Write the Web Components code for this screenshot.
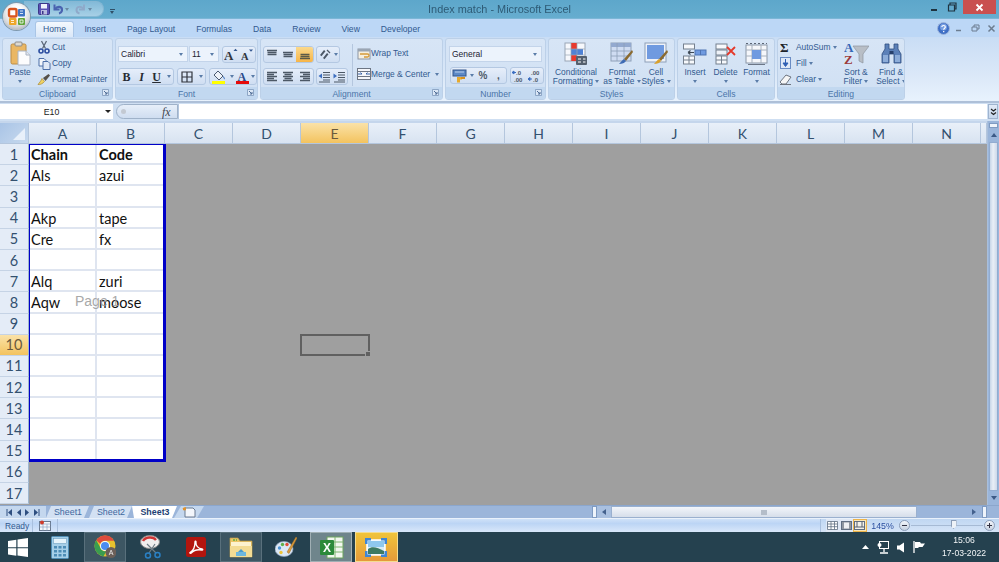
<!DOCTYPE html>
<html lang="en">
<head>
<meta charset="utf-8">
<title>Index match - Microsoft Excel</title>
<style>
html, body { margin: 0; height: 100%; overflow: hidden; background: #9f9f9f; }
</style>
</head>
<body>

<x-window>
  <x-titlebar>Index match - Microsoft Excel</x-titlebar>
  <x-tabs>
    <x-tab active>Home</x-tab><x-tab>Insert</x-tab><x-tab>Page Layout</x-tab><x-tab>Formulas</x-tab><x-tab>Data</x-tab><x-tab>Review</x-tab><x-tab>View</x-tab><x-tab>Developer</x-tab>
  </x-tabs>

  <x-ribbon>
    <x-group w="111" launcher label="Clipboard">
      <x-row>
        <x-big w="34" icon="paste">Paste<br><x-caret></x-caret></x-big>
        <x-col>
          <x-small icon="cut" g="1">Cut</x-small>
          <x-small icon="copy" g="1">Copy</x-small>
          <x-small icon="painter" g="1">Format Painter</x-small>
        </x-col>
      </x-row>
    </x-group>

    <x-group w="143" launcher label="Font">
      <x-col style="padding:7px 0 0 2px;gap:5px">
        <x-row style="gap:1px">
          <x-combo w="70">Calibri</x-combo><x-combo w="30">11</x-combo>
          <x-seg style="margin-left:2px">
            <x-btn w="16"><x-ico name="grow"></x-ico></x-btn><x-btn w="16"><x-ico name="shrink"></x-ico></x-btn>
          </x-seg>
        </x-row>
        <x-row style="gap:3px">
          <x-seg>
            <x-btn w="15"><x-letter b>B</x-letter></x-btn><x-btn w="15"><x-letter i>I</x-letter></x-btn><x-btn w="15"><x-letter b u>U</x-letter></x-btn><x-btn w="9"><x-caret></x-caret></x-btn>
          </x-seg>
          <x-seg>
            <x-btn w="18"><x-ico name="borders"></x-ico></x-btn><x-btn w="9"><x-caret></x-caret></x-btn>
          </x-seg>
          <x-seg>
            <x-btn w="18"><x-ico name="fill"></x-ico></x-btn><x-btn w="7"><x-caret></x-caret></x-btn><x-btn w="14"><x-ico name="color"></x-ico></x-btn><x-btn w="7"><x-caret></x-caret></x-btn>
          </x-seg>
        </x-row>
      </x-col>
    </x-group>

    <x-group w="183" launcher label="Alignment">
      <x-row style="padding:7px 0 0 2px">
        <x-col style="gap:5px;width:89px">
          <x-row style="gap:2px">
            <x-seg>
              <x-btn w="16"><x-ico name="vtop"></x-ico></x-btn><x-btn w="16"><x-ico name="vmid"></x-ico></x-btn><x-btn w="17" hi><x-ico name="vbot"></x-ico></x-btn>
            </x-seg>
            <x-seg><x-btn w="15"><x-ico name="orient"></x-ico></x-btn><x-btn w="7"><x-caret></x-caret></x-btn></x-seg>
          </x-row>
          <x-row style="gap:2px">
            <x-seg>
              <x-btn w="16"><x-ico name="hleft"></x-ico></x-btn><x-btn w="16"><x-ico name="hmid"></x-ico></x-btn><x-btn w="17"><x-ico name="hright"></x-ico></x-btn>
            </x-seg>
            <x-seg><x-btn w="15"><x-ico name="outdent"></x-ico></x-btn><x-btn w="15"><x-ico name="indent"></x-ico></x-btn></x-seg>
          </x-row>
        </x-col>
        <x-vsep></x-vsep>
        <x-col style="margin-top:-1px;padding-left:4px;gap:5px">
          <x-small icon="wrap" g="0">Wrap Text</x-small>
          <x-small icon="merge" g="0">Merge &amp; Center&nbsp;&nbsp;<x-caret></x-caret></x-small>
        </x-col>
      </x-row>
    </x-group>

    <x-group w="101" launcher label="Number">
      <x-col style="padding:7px 0 0 3px;gap:5px">
        <x-combo w="93">General</x-combo>
        <x-row style="gap:3px;padding-left:1px">
          <x-seg>
            <x-btn w="17"><x-ico name="currency"></x-ico></x-btn><x-btn w="7"><x-caret></x-caret></x-btn><x-btn w="16"><x-letter b dim>%</x-letter></x-btn><x-btn w="15"><x-letter b dim>,</x-letter></x-btn>
          </x-seg>
          <x-seg>
            <x-btn w="16"><x-ico name="incdec"></x-ico></x-btn><x-btn w="16"><x-ico name="decdec"></x-ico></x-btn>
          </x-seg>
        </x-row>
      </x-col>
    </x-group>

    <x-group w="127" label="Styles">
      <x-row>
        <x-big w="54" icon="cond">Conditional<br>Formatting <x-caret></x-caret></x-big>
        <x-big w="38" icon="table">Format<br>as Table <x-caret></x-caret></x-big>
        <x-big w="30" icon="cellstyle">Cell<br>Styles <x-caret></x-caret></x-big>
      </x-row>
    </x-group>

    <x-group w="98" label="Cells">
      <x-row style="padding-left:2px">
        <x-big w="30" icon="insert">Insert<br><x-caret></x-caret></x-big>
        <x-big w="31" icon="delete">Delete<br><x-caret></x-caret></x-big>
        <x-big w="31" icon="format">Format<br><x-caret></x-caret></x-big>
      </x-row>
    </x-group>

    <x-group w="128" label="Editing">
      <x-row>
        <x-col style="width:60.500px">
          <x-small icon="sigma" g="4">AutoSum <x-caret></x-caret></x-small>
          <x-small icon="filldown" g="4">Fill <x-caret></x-caret></x-small>
          <x-small icon="eraser" g="4">Clear <x-caret></x-caret></x-small>
        </x-col>
        <x-big w="35" icon="sort">Sort &amp;<br>Filter <x-caret></x-caret></x-big>
        <x-big w="35" icon="find">Find &amp;<br>Select <x-caret></x-caret></x-big>
      </x-row>
    </x-group>
  </x-ribbon>

  <x-formula name="E10"></x-formula>

  <x-row style="height:384px">
    <x-sheet></x-sheet>
    <x-vscroll></x-vscroll>
  </x-row>

  <x-sheetbar>
    <x-stab>Sheet1</x-stab><x-stab>Sheet2</x-stab><x-stab active>Sheet3</x-stab>
  </x-sheetbar>
  <x-status></x-status>

  <x-taskbar>
    <x-task w="36" icon="win"></x-task>
    <x-task icon="calc"></x-task>
    <x-task icon="chrome" open></x-task>
    <x-task icon="snip"></x-task>
    <x-task icon="pdf"></x-task>
    <x-task icon="folder" open></x-task>
    <x-task icon="paint"></x-task>
    <x-task icon="excel" open bright></x-task>
    <x-task icon="picture" hot></x-task>
  </x-taskbar>
</x-window>

<script>
const UI = '"Liberation Sans", Arial, sans-serif';
const SHEET_FONT = 'Lato, "Open Sans", sans-serif';

// every icon: [width, height, svg body]
const ICONS = {
  office: [20, 20, `<rect x="2" y="2" width="7.5" height="7.5" rx="1.5" fill="none" stroke="#d8541e" stroke-width="2.4"/><rect x="11" y="2" width="7" height="7.5" rx="1" fill="#3f74c4"/><rect x="2" y="11" width="7.5" height="7" rx="1" fill="#eea72a"/><rect x="11" y="11" width="7" height="7" rx="1" fill="#62a63a"/><path d="M13 4h3M13 6.5h3M4 13.5h3M4 15.5h3M13 13h3v3h-3z" stroke="#fff" stroke-width=".8" fill="none"/>`],
  save: [12, 12, `<rect x=".5" y=".5" width="11" height="11" rx="1" fill="#5a52b5" stroke="#3c3788"/><rect x="3" y="1" width="6" height="4.500" fill="#eef2fb"/><rect x="3" y="7" width="6" height="4.500" fill="#b9bce0"/><rect x="4" y="8" width="1.500" height="3" fill="#3c3788"/>`],
  undo: [11, 12, `<path d="M2.500 1.500v5h5" fill="none" stroke="#4a63b0" stroke-width="2"/><path d="M3 6c2-3 7-3 7 1 0 2-1 3-3 3.500" fill="none" stroke="#4a63b0" stroke-width="2.200"/>`],
  redo: [11, 12, `<path d="M9 1.500v5H4" fill="none" stroke="#8fa9c9" stroke-width="1.800"/><path d="M8.500 6C6.500 3 1.500 3 1.500 7c0 2 1 3 3 3.500" fill="none" stroke="#8fa9c9" stroke-width="2"/>`],
  help: [13, 13, `<circle cx="6.500" cy="6.500" r="6" fill="#3f6fc5" stroke="#9fb6dc"/><circle cx="6.500" cy="5" r="3.500" fill="#8eb2ec" opacity=".7"/><path d="M4.800 5c.2-2 3.500-2 3.500 0 0 1.300-1.600 1.300-1.600 2.700M6.700 9v1.300" fill="none" stroke="#fff" stroke-width="1.200"/>`],
  paste: [21, 25, `<rect x="1" y="3" width="15" height="20" rx="1.500" fill="#eab764" stroke="#bc8d46"/><rect x="5" y="1" width="7" height="4" rx="1" fill="#dcd9d2" stroke="#8c8c8c"/><path d="M8 10h8l4 4v10H8z" fill="#fcfcfd" stroke="#aab4c4"/><path d="M16 10v4h4" fill="#e3e7ee" stroke="#aab4c4"/>`],
  cut: [12, 14, `<path d="M3.500 1l4 7.500M8.500 1l-4 7.500" stroke="#5c6878" stroke-width="1.300"/><circle cx="3" cy="11" r="2" fill="none" stroke="#2c4ea0" stroke-width="1.600"/><circle cx="9" cy="11" r="2" fill="none" stroke="#2c4ea0" stroke-width="1.600"/>`],
  copy: [13, 13, `<path d="M1 1.500h5l2 2V9H1z" fill="#f3f6fb" stroke="#4d6fa8"/><path d="M5 4.500h5l2 2v6H5z" fill="#dfe8f6" stroke="#4d6fa8"/>`],
  painter: [14, 13, `<path d="M1 11.500c2 .5 5-1 6.500-3L5 5.500C4 8 2.500 9.500 1 11.500z" fill="#f0d264" stroke="#a98a36" stroke-width=".7"/><path d="M6 5l2.500 3L13 2.500 11.500 1z" fill="#55504a"/>`],
  grow: [14, 15, `<text x="0" y="12.500" font-family="Liberation Serif" font-weight="700" font-size="13" fill="#30353d">A</text><path d="M9.500 4l2-2.300 2 2.300z" fill="#31568f"/>`],
  shrink: [12, 14, `<text x="0" y="12" font-family="Liberation Serif" font-weight="700" font-size="10.500" fill="#30353d">A</text><path d="M8 1.500h4l-2 2.300z" fill="#31568f"/>`],
  borders: [12, 12, `<path d="M1 1h10v10H1zM6 1v10M1 6h10" fill="none" stroke="#30343c" stroke-width="1.200"/>`],
  fill: [15, 14, `<path d="M6 1l5 5-4 4-5-5z" fill="#eef2f8" stroke="#4b5a70"/><path d="M11 6c1.500 1 2 2.500 2 3.500-1-.5-2-1.500-2-3.500z" fill="#3d6fb8"/><rect y="11" width="13" height="3" fill="#ffff00"/>`],
  color: [13, 14, `<text x="1.500" y="10.500" font-family="Liberation Serif" font-weight="700" font-size="12" fill="#2a4a8a">A</text><rect y="11" width="13" height="3" fill="#e60a0a"/>`],
  vtop: [12, 11, `<path d="M1 1.500h10M1.500 3.500h9M1.500 5.500h9" stroke="#4c5866" stroke-width="1.500"/>`],
  vmid: [12, 11, `<path d="M1 3.500h10M1.500 5.500h9M1.500 7.500h9" stroke="#4c5866" stroke-width="1.500"/>`],
  vbot: [12, 11, `<path d="M1.500 5.500h9M1.500 7.500h9M1 9.500h10" stroke="#5c5a48" stroke-width="1.500"/>`],
  hleft: [12, 11, `<path d="M1 1.500h10M1 3.500h7M1 5.500h10M1 7.500h7M1 9.500h10" stroke="#4c5866" stroke-width="1.300"/>`],
  hmid: [12, 11, `<path d="M1 1.500h10M2.500 3.500h7M1 5.500h10M2.500 7.500h7M1 9.500h10" stroke="#4c5866" stroke-width="1.300"/>`],
  hright: [12, 11, `<path d="M1 1.500h10M4 3.500h7M1 5.500h10M4 7.500h7M1 9.500h10" stroke="#4c5866" stroke-width="1.300"/>`],
  orient: [12, 11, `<path d="M1 6l4-5 1.500 1.300-4 5zM4 9l4-5 1.500 1.300-4 5z" fill="#4c5866"/><path d="M8 1l3 3" stroke="#4c5866" stroke-width="1.200"/>`],
  outdent: [13, 12, `<path d="M5 1.500h7M5 4h7M5 6.500h7M5 9h7M1 11h11" stroke="#4c5866" stroke-width="1.100"/><path d="M.5 5L4 2.500v5z" fill="#3d6fc0"/>`],
  indent: [13, 12, `<path d="M5 1.500h7M5 4h7M5 6.500h7M5 9h7M1 11h11" stroke="#4c5866" stroke-width="1.100"/><path d="M4 5L.5 2.500v5z" fill="#3d6fc0"/>`],
  wrap: [14, 13, `<rect x="1" y="2" width="12" height="10" fill="#f6efe0" stroke="#8c95a3"/><path d="M1 2h12v2.500H1z" fill="#9aa5b3"/><path d="M3 7h7.500c2 0 2 3 0 3H7" fill="none" stroke="#d59a3a" stroke-width="1.300"/>`],
  merge: [14, 12, `<rect x=".5" y=".5" width="13" height="11" fill="#f5f7fb" stroke="#6d7684"/><path d="M.5 3.500h13M.5 8.500h13" stroke="#6d7684"/><path d="M1 6h4l-1.500-1.500M13 6H9l1.500-1.500" fill="none" stroke="#3a64a8"/>`],
  currency: [15, 14, `<rect x="1" y="1" width="13" height="6" fill="#5d89c6" stroke="#35568c"/><path d="M3 3h9" stroke="#bcd0ec"/><path d="M5 8h5v2.500H8v3H5z" fill="#e6a92c"/><rect x="9" y="8" width="4" height="2" fill="#d9921d"/>`],
  incdec: [14, 13, `<text x="4" y="6" font-family="Liberation Sans" font-weight="700" font-size="6" fill="#4c5866">.0</text><text x="2" y="12.500" font-family="Liberation Sans" font-weight="700" font-size="6" fill="#4c5866">.00</text><path d="M0 3.500h4M0 3.500l2-1.500v3z" stroke="#3d6fc0" fill="#3d6fc0"/>`],
  decdec: [14, 13, `<text x="3" y="6" font-family="Liberation Sans" font-weight="700" font-size="6" fill="#4c5866">.00</text><text x="5" y="12.500" font-family="Liberation Sans" font-weight="700" font-size="6" fill="#4c5866">.0</text><path d="M0 10h4M0 10l2-1.500v3z" stroke="#3d6fc0" fill="#3d6fc0"/>`],
  cond: [24, 24, `<rect x="1" y="1" width="20" height="18" fill="#f6f8fc" stroke="#9aa6b6"/><rect x="7" y="1" width="6" height="6" fill="#e83a2e"/><rect x="7" y="7" width="12" height="6" fill="#4f82d6"/><rect x="7" y="13" width="6" height="6" fill="#e83a2e"/><path d="M1 7h20M1 13h20M7 1v18M13 1v18" stroke="#9aa6b6" stroke-width=".7"/><rect x="12" y="14" width="11" height="9" rx="1" fill="#55606e"/><path d="M14 17h3M14 20h3M19 17h2.500M19 20h2.500" stroke="#fff"/>`],
  table: [24, 24, `<rect x="1" y="1" width="20" height="18" fill="#cfdcf2" stroke="#8ea0b8"/><rect x="1" y="1" width="20" height="4" fill="#93a9cf"/><path d="M1 9h20M1 14h20M7 1v18M14 1v18" stroke="#8ea0b8" stroke-width=".8"/><path d="M22 8L14 17l2 2 7-9z" fill="#8a6a30"/><path d="M14 17c-2 1-3 3-5 5 3 0 6-1 7-3z" fill="#3e6bb4"/>`],
  cellstyle: [24, 24, `<rect x="1" y="1" width="21" height="19" fill="#eef2f9" stroke="#8ea0b8"/><rect x="3" y="3" width="17" height="14" fill="#6f9ae0"/><path d="M23 8l-8 9 2 2 7-9z" fill="#8a6a30"/><path d="M15 17c-2 1-3 3-5 5 3 0 6-1 7-3z" fill="#d9a02c"/>`],
  insert: [24, 22, `<rect x=".5" y="1" width="11" height="5" fill="#f7f9fc" stroke="#75808e"/><rect x=".5" y="13" width="11" height="8" fill="#f7f9fc" stroke="#75808e"/><path d="M6 13v8M.5 17h11" stroke="#75808e"/><rect x="12" y="7" width="11" height="5" fill="#6f9ae0" stroke="#4e74b4"/><path d="M17.500 7v5" stroke="#4e74b4"/><path d="M5 9.500h6M5 9.500l2.500-2M5 9.500l2.500 2" fill="none" stroke="#3b4652" stroke-width="1.200"/>`],
  delete: [22, 22, `<rect x="1" y="1" width="11" height="5" fill="#f7f9fc" stroke="#75808e"/><rect x="1" y="13" width="11" height="8" fill="#f7f9fc" stroke="#75808e"/><path d="M6.500 13v8M1 17h11" stroke="#75808e"/><rect x="1" y="7" width="11" height="5" fill="#eef2f8" stroke="#75808e"/><path d="M12 4l8 8M20 4l-8 8" stroke="#e4392a" stroke-width="1.800"/>`],
  format: [24, 24, `<rect x="1" y="3" width="21" height="18" fill="#f5f7fb" stroke="#8a96a6"/><path d="M1 8h21M1 14h21M7 3v18M16 3v18" stroke="#a6b0bd"/><rect x="7" y="8" width="9" height="9" fill="#6f9ae0"/><path d="M1 1.500h21" stroke="#5c6675" stroke-dasharray="2 2"/><path d="M3 22.500h17" stroke="#6c7686"/>`],
  sigma: [11, 15, `<text x="0" y="12" font-family="Liberation Serif" font-weight="700" font-size="13" fill="#20242a">Σ</text>`],
  filldown: [11, 12, `<rect x=".5" y=".5" width="10" height="11" fill="#dfe9f8" stroke="#6a8cc4"/><path d="M5.500 2v5M3 6h5L5.500 9.500z" stroke="#2f5fb4" fill="#2f5fb4"/>`],
  eraser: [13, 12, `<path d="M1 9l6-7 5 2-5 7H3z" fill="#f6f6f6" stroke="#6e7580"/><path d="M1 11.500h11" stroke="#6e7580"/>`],
  sort: [25, 25, `<text x="0" y="10.500" font-family="Liberation Serif" font-weight="700" font-size="13" fill="#3567b6">A</text><text x="0" y="23" font-family="Liberation Serif" font-weight="700" font-size="13" fill="#9c3a3a">Z</text><path d="M9 5h16l-6 8v9l-4-2v-7z" fill="#b8bec6" stroke="#8e959f" stroke-width=".7"/>`],
  find: [21, 21, `<path d="M4 1h4v5h5V1h4v5l3 5v9h-7v-9H8v9H1v-9l3-5z" fill="#5b80b8" stroke="#304e80" stroke-width=".8"/><rect x="2" y="12" width="5" height="7" fill="#8dadd9"/><rect x="14" y="12" width="5" height="7" fill="#8dadd9"/><rect x="8.500" y="8" width="4" height="3" fill="#27406c"/>`],
  fx: [12, 14, `<text x="0" y="11" font-family="Liberation Serif" font-style="italic" font-size="12" fill="#3f4650">fx</text>`],
  sheetnew: [15, 12, `<path d="M3 2h8l2 2v7H3z" fill="#f3f6fb" stroke="#6a7a90"/><path d="M3 4l-2-2M3 1v3M1 3.500h3" stroke="#e2922a" stroke-width="1.400"/>`],
  macro: [12, 11, `<rect x=".5" y="1.500" width="11" height="9" fill="#f3f6fb" stroke="#6a7a90"/><path d="M.5 4h11M4 4v6.500M8 4v6.500M.5 7h11" stroke="#8da3c4" stroke-width=".7"/><circle cx="3" cy="2.500" r="2" fill="#cf3a2b"/>`],
  viewnormal: [11, 9, `<path d="M.5.5h10v8H.5zM.5 3h10M.5 5.700h10M4 .5v8M7.500.5v8" fill="#fff" stroke="#5f6e82" stroke-width=".8"/>`],
  viewlayout: [11, 9, `<rect x=".5" y=".5" width="10" height="8" fill="#8f96a0" stroke="#5f6e82"/><rect x="3" y="1.500" width="5" height="6" fill="#eef0f3"/>`],
  viewbreak: [11, 9, `<rect x=".5" y=".5" width="10" height="8" fill="#f2f1ea" stroke="#5f6e82"/><path d="M.5 6h10M3 .5V6M8 .5V6" stroke="#56606e"/>`],
  win: [20, 19, `<path d="M0 3l8.300-1.300v7.500H0zM9.500 1.500L20 0v9.200H9.500zM0 10.300h8.300v7.500L0 16.500zM9.500 10.300H20V19L9.500 17.600z" fill="#fff"/>`],
  calc: [18, 23, `<rect x=".5" y=".5" width="17" height="22" rx="1" fill="#a5cfe8" stroke="#4f8db4"/><rect x="2.500" y="2.500" width="13" height="5" fill="#e6f4fb" stroke="#5e93b5" stroke-width=".5"/><path d="M3 10h3v2.500H3zM7.500 10h3v2.500h-3zM12 10h3v2.500h-3zM3 14h3v2.500H3zM7.500 14h3v2.500h-3zM12 14h3v2.500h-3zM3 18h3v2.500H3zM7.500 18h3v2.500h-3zM12 18h3v2.500h-3z" fill="#4c8cb5"/>`],
  chrome: [22, 24, `<circle cx="11" cy="11" r="10.500" fill="#e6c12e"/><path d="M11 .5a10.500 10.500 0 0 1 9.100 5.300H11a5.300 5.300 0 0 0-4.800 3L2.200 5.300A10.500 10.500 0 0 1 11 .5z" fill="#dd4b3e"/><path d="M2.200 5.300l4.700 8.200a5 5 0 0 0 5.500 2.700l-3 5.200A10.500 10.500 0 0 1 2.200 5.300z" fill="#3a9d4f"/><circle cx="11" cy="11" r="5" fill="#fff"/><circle cx="11" cy="11" r="4" fill="#4c8cf0"/><circle cx="17" cy="17.500" r="5.500" fill="#6b5f58"/><text x="17" y="20" text-anchor="middle" font-family="Liberation Sans" font-size="7" fill="#eee">A</text>`],
  snip: [22, 24, `<ellipse cx="11" cy="7" rx="9.500" ry="6.500" fill="#f0eeee" stroke="#8d8d8d"/><path d="M4 6c2-4 10-5 13-1" fill="none" stroke="#cf3636" stroke-width="2.400"/><path d="M8 9l9 9M16 9l-6 9" stroke="#6e7b85" stroke-width="1.200"/><circle cx="9" cy="20.500" r="2.500" fill="none" stroke="#2980c5" stroke-width="1.500"/><circle cx="18.500" cy="20" r="2.500" fill="none" stroke="#2980c5" stroke-width="1.500"/>`],
  pdf: [20, 20, `<rect width="20" height="20" rx="2.500" fill="#b3150e"/><path d="M4 15.500c3-1.500 5-6 5-10.500 0-1.500 1.300-1 1 .5-.4 3 2 6 6 6.500 1.200.2 1 1.300-.3 1-4-.7-8 .4-10.500 3-.8.700-1.800.2-1.200-.5z" fill="none" stroke="#fff" stroke-width="1.300"/>`],
  folder: [24, 23, `<path d="M1 2h8l2 3h12v16H1z" fill="#edc766" stroke="#b79a4a" stroke-width=".7"/><path d="M2 6h20v5H2z" fill="#fdf3cf"/><path d="M1 10h22v11H1z" fill="#f3dc94"/><path d="M7 16h10v4H7z" fill="#6db7dd"/><path d="M9 16l3-3 3 3z" fill="#4a9acb"/><path d="M4 4h2M7 4h1" stroke="#5fb04a" stroke-width="1.500"/>`],
  paint: [22, 22, `<ellipse cx="9" cy="13" rx="9" ry="7.500" fill="#dbe7f5" stroke="#8fa4bf" stroke-width=".7"/><circle cx="4.500" cy="12" r="1.700" fill="#4a93d6"/><circle cx="7.500" cy="8.500" r="1.700" fill="#5fb04a"/><circle cx="12" cy="8.500" r="1.700" fill="#e04c3a"/><circle cx="6" cy="16.500" r="1.700" fill="#eec53a"/><path d="M21 1l-9 15 2 1.500L22 2z" fill="#d99a3a" stroke="#9c6b26" stroke-width=".5"/>`],
  excel: [25, 23, `<rect x="8" y="1" width="16" height="21" fill="#f2f7ef" stroke="#6ca35e"/><path d="M8 6h16M8 11h16M8 16h16M16 1v21" stroke="#7fb571"/><rect x="1" y="4" width="14" height="15" rx="1" fill="#2c8a3a"/><text x="8" y="16" text-anchor="middle" font-family="Liberation Sans" font-weight="700" font-size="12" fill="#fff">X</text>`],
  picture: [22, 19, `<rect x="2" y="2" width="18" height="15" fill="#d9ecf8" stroke="#fff" stroke-width="1.500"/><path d="M3 3h16v6H3z" fill="#8fc8ee"/><path d="M3 11c4-3 9-2 16 2v3H3z" fill="#3d7a62"/><path d="M0 0h6v2.500H2.500V6H0zM16 0h6v6h-2.500V2.500H16zM0 13h2.500v3.500H6V19H0zM19.500 13H22v6h-6v-2.500h3.500z" fill="#3f86d4"/>`],
  traynet: [12, 13, `<rect x="2.500" y=".5" width="9" height="7" fill="none" stroke="#fff"/><circle cx="2.500" cy="4" r="2" fill="#fff"/><path d="M7 8v3M3 12h8" stroke="#fff" stroke-width="1.300"/>`],
  speaker: [8, 11, `<path d="M0 3.500h2.500L7 .5v10L2.500 7.500H0z" fill="#fff"/>`],
  flag: [12, 12, `<path d="M1 0v12" stroke="#fff" stroke-width="1.300"/><path d="M2 1h5l1 1.500h4L9.500 6H6L5 7H2z" fill="#fff"/>`],
};

// makes a shadow root from a style and some markup
function shadow(el, css, html) {
  const root = el.attachShadow({ mode: 'open' });
  root.innerHTML = `<style>${css}</style>${html}`;
  return root;
}
function icon(name) {
  const [w, h, body] = ICONS[name];
  return `<svg width="${w}" height="${h}" viewBox="0 0 ${w} ${h}" style="display:block;flex:none">${body}</svg>`;
}

class XIco extends HTMLElement {
  constructor() {
    super();
    shadow(this, ':host{display:block;line-height:0}', icon(this.getAttribute('name')));
  }
}

class XWindow extends HTMLElement {
  constructor() {
    super();
    shadow(this, `:host{display:flex;flex-direction:column;width:999px;height:562px;overflow:hidden;font:8.400px ${UI};color:#31598f;filter:blur(.35px)}`, '<slot></slot>');
  }
}

class XTitlebar extends HTMLElement {
  constructor() {
    super();
    shadow(this, `
      :host{display:grid;grid-template-columns:1fr auto 1fr;align-items:center;height:19px;position:relative;
        background:linear-gradient(#5da7cb,#66adcf);border-bottom:1px solid #7cb6d6;box-sizing:border-box}
      .orb{position:absolute;left:3px;top:3px;width:27px;height:27px;border-radius:50%;z-index:2;display:flex;align-items:center;justify-content:center;
        background:radial-gradient(circle at 50% 35%,#fdfdfd 30%,#d7d9dc 62%,#8b929a 100%);box-shadow:0 0 0 1px #7f99ad}
      .qat{display:flex;align-items:center;height:16px;margin-left:24px;width:80px;padding-left:14px;box-sizing:border-box;gap:2px;
        background:linear-gradient(#83bad8,#a7d0e6);border:1px solid #86b8d4;border-left:0;border-radius:0 9px 9px 0}
      .left{display:flex;align-items:center;gap:4px}
      .t{font:10.900px ${UI};color:#2e5b76;white-space:nowrap}
      .win{justify-self:end;display:flex;align-items:flex-start;height:100%}
      .w{width:18px;display:flex;align-items:center;justify-content:center;height:14px}
      .close{width:33px;background:#c9504f;margin:0 3px 0 2px}
      .dr{width:0;height:0;border:2px solid transparent;border-top:3px solid #6a8aa4;margin-top:3px}
      .cust{width:5px;height:1px;background:#2f5068;position:relative;margin-left:2px}
      .cust:after{content:"";position:absolute;left:0;top:2px;border:2.500px solid transparent;border-top:3px solid #2f5068}
    `, `
      <div class="orb">${icon('office')}</div>
      <div class="left">
        <div class="qat">${icon('save')}${icon('undo')}<i class="dr"></i><span style="width:2px"></span>${icon('redo')}<i class="dr"></i></div>
        <i class="cust"></i>
      </div>
      <div class="t"><slot></slot></div>
      <div class="win">
        <div class="w"><svg width="8" height="8"><path d="M1 7h6" stroke="#1e3340" stroke-width="2"/></svg></div>
        <div class="w"><svg width="10" height="10"><path d="M1.500 3h6v6h-6zM3 3V1h6v6H7.500" fill="none" stroke="#1e3340" stroke-width="1.200"/></svg></div>
        <div class="w close"><svg width="9" height="9"><path d="M1.500 1.500l6 6M7.500 1.500l-6 6" stroke="#fff" stroke-width="1.800"/></svg></div>
      </div>
    `);
  }
}

class XTabs extends HTMLElement {
  constructor() {
    super();
    shadow(this, `
      :host{display:flex;align-items:flex-end;height:18px;padding-left:35px;background:#bcd7f6;position:relative}
      .r{position:absolute;right:0;top:0;height:100%;display:flex;align-items:center}
      .b{width:16px;display:flex;justify-content:center}
    `, `<slot></slot>
      <div class="r">
        <div class="b">${icon('help')}</div>
        <div class="b"><svg width="8" height="8"><path d="M1 6.500h5" stroke="#6d7d90" stroke-width="1.500"/></svg></div>
        <div class="b"><svg width="9" height="8"><path d="M1 3h5v4H1zM3 3V1h5v4H6" fill="none" stroke="#6d7d90"/></svg></div>
        <div class="b"><svg width="9" height="9"><path d="M1.500 1.500l6 6M7.500 1.500l-6 6" stroke="#6d7d90" stroke-width="1.500"/></svg></div>
      </div>`);
  }
}

class XTab extends HTMLElement {
  constructor() {
    super();
    shadow(this, `
      :host{display:flex;align-items:center;height:16px;padding:0 10.500px 1px;font-size:8.600px;color:#31598f;white-space:nowrap;margin-top:2px;box-sizing:border-box}
      :host([active]){padding:0 7px 1px;background:linear-gradient(#f3f8fe,#dbe8f8);border:1px solid #a9c5e6;border-bottom:0;border-radius:3px 3px 0 0}
    `, '<slot></slot>');
  }
}

class XRibbon extends HTMLElement {
  constructor() {
    super();
    shadow(this, `
      :host{display:flex;gap:2px;height:66px;padding:1px 0 0 2px;box-sizing:border-box;
        background:linear-gradient(#c9ddf5,#dbe8f8 60%,#e8f2fd);border-bottom:2px solid #aec0d8;flex:none}
    `, '<slot></slot>');
  }
}

class XGroup extends HTMLElement {
  constructor() {
    super();
    const launcher = this.hasAttribute('launcher')
      ? `<svg class="lau" width="7" height="7"><path d="M.5.500h6v6h-6z" fill="#dbe7f6" stroke="#7e98ba" stroke-width=".8"/><path d="M2 2l3 3M5 3v2H3" fill="none" stroke="#4f6d96"/></svg>` : '';
    shadow(this, `
      :host{display:flex;flex-direction:column;width:${this.getAttribute('w')}px;height:62px;box-sizing:border-box;flex:none;
        border:1px solid #bcd0e8;border-radius:3px;overflow:hidden;background:linear-gradient(#d7e5f6,#d0e0f3)}
      .body{flex:1;min-height:0}
      .label{height:12px;flex:none;display:flex;align-items:center;justify-content:center;background:#c2d8f0;color:#4a74a8;font-size:8.600px;position:relative;padding-top:1px;box-sizing:border-box}
      .lau{position:absolute;right:3px;top:2px}
    `, `<div class="body"><slot></slot></div><div class="label">${this.getAttribute('label')}${launcher}</div>`);
  }
}

class XRow extends HTMLElement {
  constructor() {
    super();
    shadow(this, ':host{display:flex;align-items:flex-start;flex:none}', '<slot></slot>');
  }
}

class XCol extends HTMLElement {
  constructor() {
    super();
    shadow(this, ':host{display:flex;flex-direction:column;flex:none}', '<slot></slot>');
  }
}

class XBig extends HTMLElement {
  constructor() {
    super();
    shadow(this, `
      :host{display:flex;flex-direction:column;align-items:center;width:${this.getAttribute('w')}px;flex:none;text-align:center;white-space:nowrap;line-height:9.500px;color:#31598f}
      .i{height:26px;padding-top:3px;box-sizing:border-box;display:flex;align-items:center;justify-content:center;margin-bottom:2.500px}
    `, `<div class="i">${icon(this.getAttribute('icon'))}</div><div><slot></slot></div>`);
  }
}

class XSmall extends HTMLElement {
  constructor() {
    super();
    const g = this.getAttribute('g') || 3;
    shadow(this, `
      :host{display:flex;align-items:center;height:16px;white-space:nowrap;color:#31598f}
      .i{width:14px;display:flex;justify-content:center;margin-right:${g}px;flex:none}
      .x{display:block}
    `, `<div class="i">${icon(this.getAttribute('icon'))}</div><div class="x"><slot></slot></div>`);
  }
}

class XCaret extends HTMLElement {
  constructor() {
    super();
    shadow(this, `:host{display:inline-block;width:0;height:0;border:2.500px solid transparent;border-top:3px solid #5a7ca8;border-bottom:0;vertical-align:middle}`, '');
  }
}

class XCombo extends HTMLElement {
  constructor() {
    super();
    shadow(this, `
      :host{display:flex;align-items:center;justify-content:space-between;width:${this.getAttribute('w')}px;height:16px;box-sizing:border-box;padding:0 4px 0 2px;flex:none;
        background:#ecf3fc;border:1px solid #c3d4ea;color:#223;font-size:8.500px}
    `, '<slot></slot><x-caret></x-caret>');
  }
}

class XSeg extends HTMLElement {
  constructor() {
    super();
    shadow(this, `
      :host{display:flex;height:17px;box-sizing:border-box;border:1px solid #b4c8e2;border-radius:3px;background:linear-gradient(#e6eefa,#cfdef2);flex:none;overflow:hidden}
    `, '<slot></slot>');
  }
}

class XBtn extends HTMLElement {
  constructor() {
    super();
    shadow(this, `
      :host{display:flex;align-items:center;justify-content:center;width:${this.getAttribute('w')}px;flex:none}
      :host([hi]){background:linear-gradient(#fbd98c,#f7b548)}
    `, '<slot></slot>');
  }
}

class XLetter extends HTMLElement {
  constructor() {
    super();
    shadow(this, `
      :host{font:12px "Liberation Serif",serif;color:#262b33;line-height:1}
      :host([b]){font-weight:700}
      :host([i]){font-style:italic;font-weight:700}
      :host([u]){text-decoration:underline}
      :host([dim]){font:700 10px "Liberation Sans",sans-serif;color:#4c5866}
    `, '<slot></slot>');
  }
}

class XVsep extends HTMLElement {
  constructor() {
    super();
    shadow(this, ':host{display:block;width:1px;height:42px;margin-top:-2px;background:#b4c6de;flex:none}', '');
  }
}

class XFormula extends HTMLElement {
  constructor() {
    super();
    shadow(this, `
      :host{display:flex;height:18px;padding:1px 0 2px;box-sizing:border-box;background:#cfdff2;color:#222;flex:none}
      .name{width:113px;background:#fff;display:flex;align-items:center;position:relative;justify-content:center;padding-right:10px;box-sizing:border-box;font:8.800px ${UI}}
      .name i{position:absolute;right:2px;top:6px;border:3px solid transparent;border-top:3px solid #222;border-bottom:0}
      .fx{width:62px;margin-left:3px;background:linear-gradient(#e7eff9,#cfddf0);border:1px solid #9fb2c9;border-radius:8px 0 0 8px;box-sizing:border-box;display:flex;align-items:center;justify-content:space-between;padding:0 3px 0 4px}
      .fx b{width:5px;height:5px;border-radius:50%;background:#c3c9d2}
      .in{flex:1;background:#fff;border-left:1px solid #b2c5de}
      .exp{width:10px;margin:0 1px 0 1px;background:linear-gradient(#e2ebf7,#c5d6ec);border:1px solid #9fb4cf;box-sizing:border-box;display:flex;align-items:center;justify-content:center}
    `, `
      <div class="name">${this.getAttribute('name')}<i></i></div>
      <div class="fx"><b></b>${icon('fx')}</div>
      <div class="in"></div>
      <div class="exp"><svg width="7" height="8"><path d="M1 1l2.500 2L6 1M1 4.500l2.500 2 2.500-2" fill="none" stroke="#222" stroke-width="1.200"/></svg></div>
    `);
  }
}

const CELLS = {
  A1: 'Chain', B1: 'Code', A2: 'Als', B2: 'azui', A4: 'Akp', B4: 'tape',
  A5: 'Cre', B5: 'fx', A7: 'Alq', B7: 'zuri', A8: 'Aqw', B8: 'moose',
};
const COLS = 'ABCDEFGHIJKLMN'.split('');

class XSheet extends HTMLElement {
  constructor() {
    super();
    let cells = '<div class="corner"></div>';
    COLS.forEach(c => { cells += `<div class="ch${c === 'E' ? ' on' : ''}">${c}</div>`; });
    cells += '<div class="ch"></div>';
    for (let r = 1; r <= 17; r++) {
      cells += `<div class="rh${r === 10 ? ' on' : ''}">${r}</div>`;
      COLS.forEach(c => {
        const inPrint = r <= 15 && (c === 'A' || c === 'B');
        const bold = r === 1 ? ' bold' : '';
        cells += `<div class="${inPrint ? 'cell' : 'out'}${bold}">${CELLS[c + r] || ''}</div>`;
      });
      cells += '<div class="out"></div>';
    }
    shadow(this, `
      :host{display:block;width:987px;height:384px;overflow:hidden;position:relative;background:#9f9f9f;flex:none;border-top:2px solid #c5d6ec;box-sizing:border-box}
      .grid{display:grid;grid-template-columns:29px repeat(14,68px) 6px;grid-template-rows:21px;grid-auto-rows:21.200px;font:14.500px ${SHEET_FONT};color:#111}
      .ch,.rh,.corner{display:flex;align-items:center;justify-content:center;box-sizing:border-box;color:#33506f;border-right:1px solid #b4c6dd;border-bottom:1px solid #b4c6dd}
      .ch{background:linear-gradient(#e9f0f9,#d8e3f1);font-size:14px}
      .rh{background:#e4ecf7;font-size:14.500px;border-right:1px solid #9eb6ce;border-bottom:1px solid #c5d3e5}
      .ch.on{background:linear-gradient(#fae2a8,#f3c35f);color:#6a5a3c}
      .rh.on{background:linear-gradient(#fae2a8,#f3c35f);color:#6a5a3c}
      .corner{background:linear-gradient(135deg,#a9c4e6,#c7d9ee);position:relative}
      .corner:after{content:"";position:absolute;right:3px;bottom:3px;border-left:12px solid transparent;border-bottom:12px solid #e8f0fa}
      .cell{background:#fff;border-right:2px solid #dfe5f0;border-bottom:2px solid #dfe5f0;box-sizing:border-box;padding:2px 0 0 2px;line-height:17px;white-space:nowrap;overflow:hidden}
      .cell.bold{font-weight:700}
      .out{background:#9f9f9f}
      .print{position:absolute;left:29px;top:21px;width:137px;height:318px;box-sizing:border-box;border:solid #0000c8;border-width:1px 3px 3px 1.500px;pointer-events:none}
      .sel{position:absolute;left:300px;top:211px;width:70px;height:22px;box-sizing:border-box;border:2px solid #606060}
      .sel:after{content:"";position:absolute;right:-3px;bottom:-3px;width:4px;height:4px;background:#606060;border:1px solid #9f9f9f}
      .wm{position:absolute;left:75px;top:170px;font:14px ${UI};color:#9a9a9a;opacity:.85}
    `, `<div class="grid">${cells}</div><div class="print"></div><div class="sel"></div><div class="wm">Page 1</div>`);
  }
}

class XVscroll extends HTMLElement {
  constructor() {
    super();
    shadow(this, `
      :host{display:flex;flex-direction:column;width:12px;height:384px;box-sizing:border-box;background:#9ab5da;padding:2px 1px 0 1px;flex:none;border-left:1px solid #a9bfdc}
      .split{height:5px;background:#eef4fb;border:1px solid #7f9bc2;box-sizing:border-box;flex:none}
      .btn{height:14px;flex:none;display:flex;align-items:center;justify-content:center}
      .thumb{flex:1;background:linear-gradient(90deg,#c8d6e8,#e9eff7 45%,#cdd9ea);border:1px solid #92acd0;box-sizing:border-box}
      i{border:3.500px solid transparent}
    `, `<div class="split"></div>
      <div class="btn"><i style="border-bottom:4px solid #3c5a86;border-top:0"></i></div>
      <div class="thumb"></div>
      <div class="btn"><i style="border-top:4px solid #3c5a86;border-bottom:0"></i></div>`);
  }
}

class XSheetbar extends HTMLElement {
  constructor() {
    super();
    const nav = 'display:block';
    shadow(this, `
      :host{display:flex;align-items:stretch;height:13px;background:#9bb5da;border-top:1px solid #8ba6cc;box-sizing:border-box;flex:none}
      .nav{width:46px;flex:none;display:flex;align-items:center;justify-content:space-around;padding:0 4px;box-sizing:border-box;background:#c4d7ee}
      .new{width:30px;background:#c4d7ee;margin-left:-3px;clip-path:polygon(0 100%,7px 0,100% 0,calc(100% - 7px) 100%);display:flex;align-items:center;justify-content:center;flex:none}
      .fill{flex:1}
      .split{width:5px;background:#eef4fb;border:1px solid #7f9bc2;box-sizing:border-box;flex:none}
      .l{width:14px;flex:none;display:flex;align-items:center;justify-content:center;background:#a9c0e0}
      .l i{border:3px solid transparent;border-right:4px solid #44618d;border-left:0}
      .thumb{width:306px;flex:none;background:linear-gradient(#f2f5fa,#d6deea);border:1px solid #9ab0cf;box-sizing:border-box;display:flex;align-items:center;justify-content:center}
      .thumb b{width:6px;height:5px;background:#b4bdc9}
      .r{width:65px;flex:none;display:flex;align-items:center;justify-content:flex-end;padding-right:6px;box-sizing:border-box}
      .r i{border:3px solid transparent;border-left:4px solid #44618d;border-right:0}
      .end{width:12px;flex:none}
    `, `
      <div class="nav">
        <svg style="${nav}" width="6" height="7"><path d="M1 0v7" stroke="#2f4f80"/><path d="M6 0v7L2 3.500z" fill="#2f4f80"/></svg>
        <svg style="${nav}" width="5" height="7"><path d="M5 0v7L1 3.500z" fill="#2f4f80"/></svg>
        <svg style="${nav}" width="5" height="7"><path d="M0 0v7l4-3.500z" fill="#2f4f80"/></svg>
        <svg style="${nav}" width="6" height="7"><path d="M5 0v7" stroke="#2f4f80"/><path d="M0 0v7l4-3.500z" fill="#2f4f80"/></svg>
      </div>
      <slot></slot>
      <div class="new">${icon('sheetnew')}</div>
      <div class="fill"></div>
      <div class="split"></div>
      <div class="l"><i></i></div>
      <div class="thumb"><b></b></div>
      <div class="r"><i></i></div>
      <div class="split"></div>
      <div class="end"></div>
    `);
  }
}

class XStab extends HTMLElement {
  constructor() {
    super();
    shadow(this, `
      :host{display:flex;align-items:center;justify-content:center;width:44px;flex:none;margin-right:-1px;font-size:8.900px;color:#41689e;background:#d3e1f3;
        clip-path:polygon(0 100%,5px 0,calc(100% - 1px) 0,calc(100% - 6px) 100%)}
      :host([active]){background:#fff;color:#1e3f74;font-weight:700;width:46px;clip-path:polygon(0 0,calc(100% - 1px) 0,calc(100% - 6px) 100%,2px 100%)}
    `, '<slot></slot>');
  }
}

class XStatus extends HTMLElement {
  constructor() {
    super();
    shadow(this, `
      :host{display:flex;align-items:center;height:14px;box-sizing:border-box;background:linear-gradient(#cfe1f8,#bcd5f5 35%,#d9e7fa);border-top:1px solid #e9f1fb;flex:none;font-size:8.400px;color:#31598f}
      .ready{width:33px;padding-left:5px;box-sizing:border-box;border-right:1px solid #a9c0de;height:100%;display:flex;align-items:center;flex:none}
      .m{width:25px;display:flex;justify-content:center;border-right:1px solid #a9c0de;height:100%;align-items:center;flex:none;box-sizing:border-box;padding-right:1px}
      .fill{flex:1}
      .z{width:179px;flex:none;display:flex;align-items:center;height:100%;background:linear-gradient(#c0d7f2,#d5e4f7);border-left:1px solid #a9c0de;box-sizing:border-box;padding:0 4px 0 5px}
      .vb{width:13.500px;height:13px;display:flex;align-items:center;justify-content:center;background:#dfe8f5;flex:none;box-sizing:border-box}
      .vb.on{background:#fbe6b4;border:1px solid #ecb44c}
      .pc{width:32px;text-align:center;color:#2b4fa0;font-size:8.800px;flex:none}
      .circle{width:11px;height:11px;border-radius:50%;background:linear-gradient(#f3f6fb,#c6d1e0);border:1px solid #8b9db8;box-sizing:border-box;flex:none;position:relative}
      .circle:before{content:"";position:absolute;left:2px;right:2px;top:3.500px;height:1.500px;background:#334}
      .plus:after{content:"";position:absolute;top:2px;bottom:2px;left:3.500px;width:1.500px;background:#334}
      .track{flex:1;height:1px;background:#a6bad4;position:relative;margin:0 1px}
      .track b{position:absolute;left:40px;top:-5px;width:6px;height:9px;background:#eef2f7;border:1px solid #8a9cb6;box-sizing:border-box;clip-path:polygon(0 0,100% 0,100% 65%,50% 100%,0 65%)}
    `, `
      <div class="ready">Ready</div>
      <div class="m">${icon('macro')}</div>
      <div class="fill"></div>
      <div class="z">
        <div class="vb">${icon('viewnormal')}</div><div class="vb">${icon('viewlayout')}</div><div class="vb on">${icon('viewbreak')}</div>
        <div class="pc">145%</div>
        <div class="circle"></div>
        <div class="track"><b></b></div>
        <div class="circle plus"></div>
      </div>
    `);
  }
}

class XTaskbar extends HTMLElement {
  constructor() {
    super();
    shadow(this, `
      :host{display:flex;align-items:stretch;gap:3px;height:30px;background:#25414f;flex:none;color:#fff}
      .tray{margin-left:auto;display:flex;align-items:center;color:#f2f5f7}
      .t{width:18px;display:flex;justify-content:center;flex:none}
      .clock{width:70px;text-align:center;font:8.600px/13px ${UI};margin-left:1px}
    `, `<slot></slot>
      <div class="tray">
        <div class="t"><svg width="7" height="4"><path d="M0 4l3.500-4L7 4z" fill="#fff"/></svg></div>
        <div class="t">${icon('traynet')}</div>
        <div class="t">${icon('speaker')}</div>
        <div class="t">${icon('flag')}</div>
        <div class="clock">15:06<br>17-03-2022</div>
      </div>`);
  }
}

class XTask extends HTMLElement {
  constructor() {
    super();
    shadow(this, `
      :host{display:flex;align-items:center;justify-content:center;width:${this.getAttribute('w') || 42.2}px;flex:none;box-sizing:border-box}
      :host([open]){background:#3d5663;border:1px solid #59707c}
      :host([bright]){background:#6f858c;border-color:#a0afb4}
      :host([hot]){background:linear-gradient(#f0c43a,#e59a3a);border:1px solid #f3dc92}
    `, icon(this.getAttribute('icon')));
  }
}

customElements.define('x-ico', XIco);
customElements.define('x-window', XWindow);
customElements.define('x-titlebar', XTitlebar);
customElements.define('x-tabs', XTabs);
customElements.define('x-tab', XTab);
customElements.define('x-ribbon', XRibbon);
customElements.define('x-group', XGroup);
customElements.define('x-row', XRow);
customElements.define('x-col', XCol);
customElements.define('x-big', XBig);
customElements.define('x-small', XSmall);
customElements.define('x-caret', XCaret);
customElements.define('x-combo', XCombo);
customElements.define('x-seg', XSeg);
customElements.define('x-btn', XBtn);
customElements.define('x-letter', XLetter);
customElements.define('x-vsep', XVsep);
customElements.define('x-formula', XFormula);
customElements.define('x-sheet', XSheet);
customElements.define('x-vscroll', XVscroll);
customElements.define('x-sheetbar', XSheetbar);
customElements.define('x-stab', XStab);
customElements.define('x-status', XStatus);
customElements.define('x-taskbar', XTaskbar);
customElements.define('x-task', XTask);
</script>
</body>
</html>
